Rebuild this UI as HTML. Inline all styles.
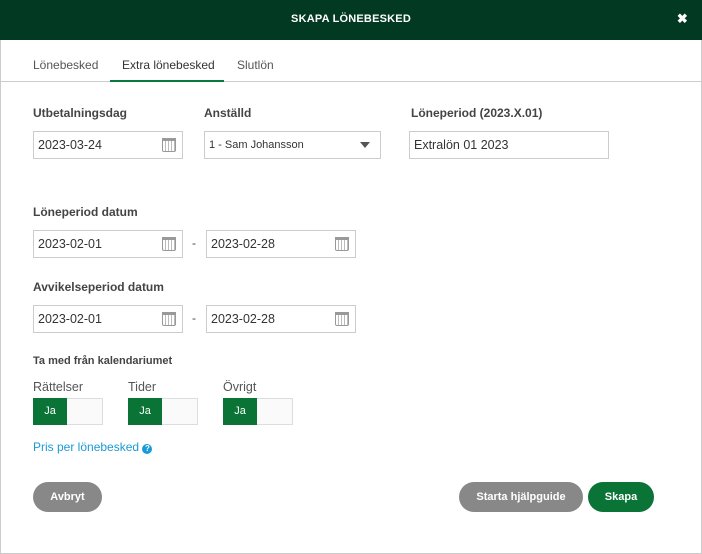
<!DOCTYPE html>
<html><head><meta charset="utf-8"><style>
*{box-sizing:border-box;margin:0;padding:0}
body{width:702px;height:554px;background:#fff;font-family:"Liberation Sans",sans-serif;position:relative;overflow:hidden;color:#333}
.frame{position:absolute;left:0;top:0;width:702px;height:554px;border:1px solid #ccc;border-top:none}
.hdr{position:absolute;left:0;top:0;width:702px;height:40px;background:#023922;color:#fff;font-weight:bold;font-size:11px;text-align:center;line-height:38px;letter-spacing:.2px}
.x{position:absolute;right:14px;top:0;font-size:13px}
.tab{position:absolute;top:58px;font-size:12px;color:#555}
.tline{position:absolute;left:0;top:81px;width:702px;height:1px;background:#ccc}
.tul{position:absolute;left:110px;top:80px;width:114px;height:2px;background:#0a7a3c}
.lbl{position:absolute;font-size:12px;font-weight:bold;color:#444}
.inp{position:absolute;border:1px solid #ccc;height:28px;font-size:12.5px;line-height:26px;padding-left:4px;color:#333;background:#fff}
.cal{position:absolute;right:6px;top:6px;width:14px;height:14px;border:1px solid #999;border-radius:2px;background:repeating-linear-gradient(90deg,transparent 0 2px,#bbb 2px 3px)}
.cal:before{content:"";position:absolute;left:-1px;right:-1px;top:-1px;height:3px;background:#999}
.dash{position:absolute;font-size:12px;color:#444}
.sl{position:absolute;font-size:12.5px;color:#555;top:380px}
.tg{position:absolute;top:398px;width:70px;height:27px;border:1px solid #ddd;background:#fafafa}
.tg span{position:absolute;left:-1px;top:-1px;width:34px;height:27px;background:#0a7336;color:#fff;font-size:11px;text-align:center;line-height:27px}
.btn{position:absolute;top:482px;height:30px;border-radius:15px;color:#fff;font-size:11px;font-weight:bold;text-align:center;line-height:30px}
</style></head><body>
<div class="frame"></div>
<div class="hdr">SKAPA LÖNEBESKED<span class="x">✖</span></div>
<div class="tab" style="left:33px">Lönebesked</div>
<div class="tab" style="left:122px;color:#333">Extra lönebesked</div>
<div class="tab" style="left:237px">Slutlön</div>
<div class="tline"></div><div class="tul"></div>

<div class="lbl" style="left:33px;top:106px">Utbetalningsdag</div>
<div class="lbl" style="left:204px;top:106px">Anställd</div>
<div class="lbl" style="left:411px;top:106px">Löneperiod (2023.X.01)</div>
<div class="inp" style="left:33px;top:131px;width:150px">2023-03-24<div class="cal"></div></div>
<div class="inp" style="left:204px;top:131px;width:177px;font-size:11px">1 - Sam Johansson<span style="position:absolute;right:10px;top:10px;border-left:5px solid transparent;border-right:5px solid transparent;border-top:6px solid #555"></span></div>
<div class="inp" style="left:409px;top:131px;width:200px">Extralön 01 2023</div>

<div class="lbl" style="left:33px;top:205px">Löneperiod datum</div>
<div class="inp" style="left:33px;top:230px;width:150px">2023-02-01<div class="cal"></div></div>
<div class="dash" style="left:192px;top:236px">-</div>
<div class="inp" style="left:206px;top:230px;width:150px">2023-02-28<div class="cal"></div></div>

<div class="lbl" style="left:33px;top:280px">Avvikelseperiod datum</div>
<div class="inp" style="left:33px;top:305px;width:150px">2023-02-01<div class="cal"></div></div>
<div class="dash" style="left:192px;top:311px">-</div>
<div class="inp" style="left:206px;top:305px;width:150px">2023-02-28<div class="cal"></div></div>

<div class="lbl" style="left:33px;top:355px;font-size:11px">Ta med från kalendariumet</div>
<div class="sl" style="left:33px">Rättelser</div>
<div class="sl" style="left:128px">Tider</div>
<div class="sl" style="left:223px">Övrigt</div>
<div class="tg" style="left:33px"><span>Ja</span></div>
<div class="tg" style="left:128px"><span>Ja</span></div>
<div class="tg" style="left:223px"><span>Ja</span></div>

<div style="position:absolute;left:33px;top:440px;font-size:12px;color:#1a9ad6">Pris per lönebesked <span style="display:inline-block;width:10px;height:10px;border-radius:50%;background:#1a9ad6;color:#fff;font-size:8px;font-weight:bold;text-align:center;line-height:10px;vertical-align:0">?</span></div>

<div class="btn" style="left:33px;width:69px;background:#888">Avbryt</div>
<div class="btn" style="left:459px;width:124px;background:#888">Starta hjälpguide</div>
<div class="btn" style="left:588px;width:66px;background:#0a7336">Skapa</div>
</body></html>
